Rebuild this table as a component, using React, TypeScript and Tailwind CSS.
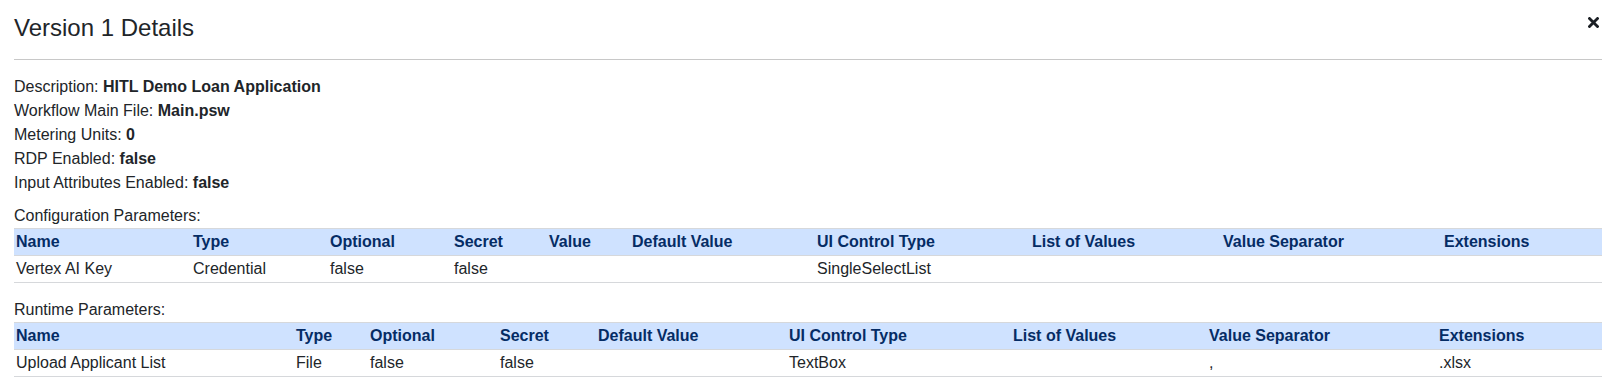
import React from "react";

type Table = {
  widths: number[];
  headers: string[];
  rows: string[][];
};

const configTable: Table = {
  widths: [177, 137, 124, 95, 83, 185, 215, 191, 221, 160],
  headers: [
    "Name",
    "Type",
    "Optional",
    "Secret",
    "Value",
    "Default Value",
    "UI Control Type",
    "List of Values",
    "Value Separator",
    "Extensions",
  ],
  rows: [["Vertex AI Key", "Credential", "false", "false", "", "", "SingleSelectList", "", "", ""]],
};

const runtimeTable: Table = {
  widths: [280, 74, 130, 98, 191, 224, 196, 230, 165],
  headers: [
    "Name",
    "Type",
    "Optional",
    "Secret",
    "Default Value",
    "UI Control Type",
    "List of Values",
    "Value Separator",
    "Extensions",
  ],
  rows: [["Upload Applicant List", "File", "false", "false", "", "TextBox", "", ",", ".xlsx"]],
};

const details: [string, string][] = [
  ["Description", "HITL Demo Loan Application"],
  ["Workflow Main File", "Main.psw"],
  ["Metering Units", "0"],
  ["RDP Enabled", "false"],
  ["Input Attributes Enabled", "false"],
];

const ParamTable = ({ table }: { table: Table }) => (
  <table className="w-full table-fixed border-collapse">
    <colgroup>
      {table.widths.map((w, i) => (
        <col key={i} style={{ width: w }} />
      ))}
    </colgroup>
    <thead>
      <tr className="bg-[#cfe2ff] border-t border-b border-[#d6d8db]">
        {table.headers.map((h) => (
          <th
            key={h}
            className="h-[27px] pl-[2px] text-left align-middle font-bold leading-[20px] text-[#052c65]"
          >
            {h}
          </th>
        ))}
      </tr>
    </thead>
    <tbody>
      {table.rows.map((row, r) => (
        <tr key={r} className="border-b border-[#d6d8db]">
          {row.map((c, i) => (
            <td key={i} className="h-[27px] pl-[2px] align-middle leading-[20px]">
              {c}
            </td>
          ))}
        </tr>
      ))}
    </tbody>
  </table>
);

const App = () => {
  return (
    <div className="min-h-screen w-full bg-white pl-[14px] pr-[20px] text-[#212529] font-['Liberation_Sans',Arial,sans-serif] text-[16px]">
      {/* Header */}
      <div className="flex items-start justify-between pt-[14px] pb-[18px]">
        <h4 className="text-[24px] leading-[27px] font-normal">Version 1 Details</h4>
        <button className="mt-[3px] mr-[3px] text-[#1b1f24]" aria-label="Close">
          <svg width="11" height="11" viewBox="0 0 11 11">
            <path d="M1.5 1.5 L9.5 9.5 M9.5 1.5 L1.5 9.5" stroke="currentColor" strokeWidth="2.8" strokeLinecap="square" />
          </svg>
        </button>
      </div>
      <div className="h-px bg-[#c8c8c8]" />

      {/* Body */}
      <div className="pt-[15px] leading-[24px]">
        {details.map(([k, v]) => (
          <div key={k}>
            {k}: <b>{v}</b>
          </div>
        ))}

        <div className="mt-[9px]">Configuration Parameters:</div>
        <ParamTable table={configTable} />

        <div className="mt-[15px]">Runtime Parameters:</div>
        <ParamTable table={runtimeTable} />
      </div>
    </div>
  );
};

export default App;
